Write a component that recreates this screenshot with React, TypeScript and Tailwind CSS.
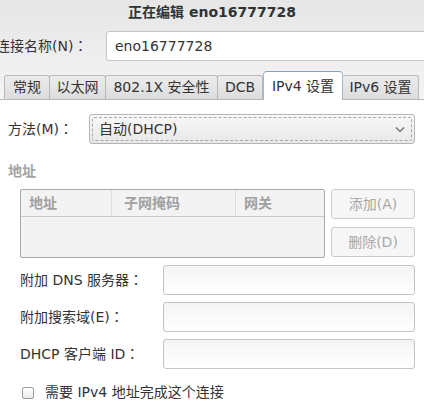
import React from 'react';

const tabs = [
  { label: '常规', w: 'w-[46px]' },
  { label: '以太网', w: 'w-[57px]' },
  { label: '802.1X 安全性', w: 'w-[113px]' },
  { label: 'DCB', w: 'w-[46px]' },
];

// centred full-width colon, like the GTK dialog
const Colon: React.FC = () => (
  <span style={{ fontFamily: '"Noto Sans CJK TC", sans-serif' }}>：</span>
);

const FieldRow: React.FC<{ label: string }> = ({ label }) => (
  <div className="flex items-center h-[30px]">
    <span className="w-[143px] text-[14px] text-[#333]">
      {label}
      <Colon />
    </span>
    <div className="flex-1 h-[30px] rounded-[3px] border border-[#c4c4c4] bg-gradient-to-b from-[#f4f4f4] to-white" />
  </div>
);

const App: React.FC = () => {
  return (
    <div
      className="w-[424px] h-[409px] overflow-hidden bg-white text-[#333]"
      style={{ fontFamily: '"DejaVu Sans", "Noto Sans CJK SC", sans-serif' }}
    >
      {/* Header */}
      <div className="bg-gradient-to-b from-[#e6e6e6] to-[#f4f4f4]">
        <div className="h-[25px] flex items-center justify-center text-[14px] font-bold text-[#2e3436]">
          正在编辑 eno16777728
        </div>

        <div className="flex items-center h-[30px] mt-[6px] -ml-[4px] -mr-[10px]">
          <span className="w-[110px] text-[14px]">
            连接名称(N)
            <Colon />
          </span>
          <div className="flex-1 h-[30px] rounded-[3px] border border-[#c4c4c4] bg-white flex items-center px-[8px] text-[14px]">
            eno16777728
          </div>
        </div>

        {/* Tabs */}
        <div className="flex items-end h-[29px] mt-[10px] pl-[4px] border-b border-[#b8b8b8]">
          {tabs.map((t) => (
            <div
              key={t.label}
              className={`${t.w} h-[24px] flex items-center justify-center text-[14px] text-[#333] border border-b-0 border-[#b8b8b8] -ml-px first:ml-0 rounded-t-[3px] bg-gradient-to-b from-[#ececec] to-[#dcdcdc]`}
            >
              {t.label}
            </div>
          ))}
          <div className="w-[80px] h-[29px] -mb-px flex items-center justify-center text-[14px] text-[#333] border border-b-0 border-[#a9b6c4] border-t-[#7ea3c8] rounded-t-[4px] bg-white">
            IPv4 设置
          </div>
          <div className="w-[76px] h-[24px] flex items-center justify-center text-[14px] text-[#333] border border-b-0 border-l-0 border-[#b8b8b8] rounded-t-[3px] bg-gradient-to-b from-[#ececec] to-[#dcdcdc]">
            IPv6 设置
          </div>
        </div>
      </div>

      {/* Content */}
      <div className="pl-[8px] pr-[9px] pt-[14px]">
        <div className="flex items-center h-[30px]">
          <span className="w-[81px] text-[14px]">
            方法(M)
            <Colon />
          </span>
          <div className="flex-1 h-[30px] rounded-[3px] border border-[#b4b4b4] bg-gradient-to-b from-[#f8f8f8] to-[#e8e8e8] p-[2px]">
            <div className="h-full border border-dashed border-[#a8a8a8] rounded-[2px] flex items-center justify-between pl-[6px] pr-[6px] text-[14px]">
              <span>自动(DHCP)</span>
              <svg width="10" height="7" viewBox="0 0 10 7" fill="none">
                <path d="M1 1.5 L5 5.5 L9 1.5" stroke="#777" strokeWidth="1.5" />
              </svg>
            </div>
          </div>
        </div>

        <div className="mt-[19px] text-[14px] font-bold text-[#a3a3a3] leading-[17px]">地址</div>

        <div className="flex gap-[6px] mt-[9px] pl-[12px]">
          <div className="w-[305px] h-[69px] border border-[#a9a9a9] rounded-[2px] bg-[#f3f3f3]">
            <div className="flex h-[27px] border-b border-[#c8c8c8] text-[14px] font-bold text-[#a0a0a0]">
              <div className="w-[91px] flex items-center pl-[8px] border-r border-[#dedede]">地址</div>
              <div className="w-[124px] flex items-center pl-[12px] border-r border-[#dedede]">子网掩码</div>
              <div className="flex-1 flex items-center pl-[8px]">网关</div>
            </div>
          </div>
          <div className="flex flex-col gap-[8px]">
            <div className="w-[84px] h-[30px] rounded-[3px] border border-[#cacaca] bg-[#f6f6f6] flex items-center justify-center text-[14px] text-[#a8a8a8]">
              添加(A)
            </div>
            <div className="w-[84px] h-[30px] rounded-[3px] border border-[#cacaca] bg-[#f6f6f6] flex items-center justify-center text-[14px] text-[#a8a8a8]">
              删除(D)
            </div>
          </div>
        </div>

        <div className="flex flex-col gap-[7px] mt-[7px] pl-[12px]">
          <FieldRow label="附加 DNS 服务器" />
          <FieldRow label="附加搜索域(E)" />
          <FieldRow label="DHCP 客户端 ID" />
        </div>

        <div className="flex items-center mt-[13px] pl-[14px]">
          <div className="w-[12px] h-[12px] rounded-[2px] border border-[#9a9a9a] bg-gradient-to-b from-white to-[#eaeaea]" />
          <span className="ml-[11px] text-[14px]">需要 IPv4 地址完成这个连接</span>
        </div>
      </div>
    </div>
  );
};

export default App;
